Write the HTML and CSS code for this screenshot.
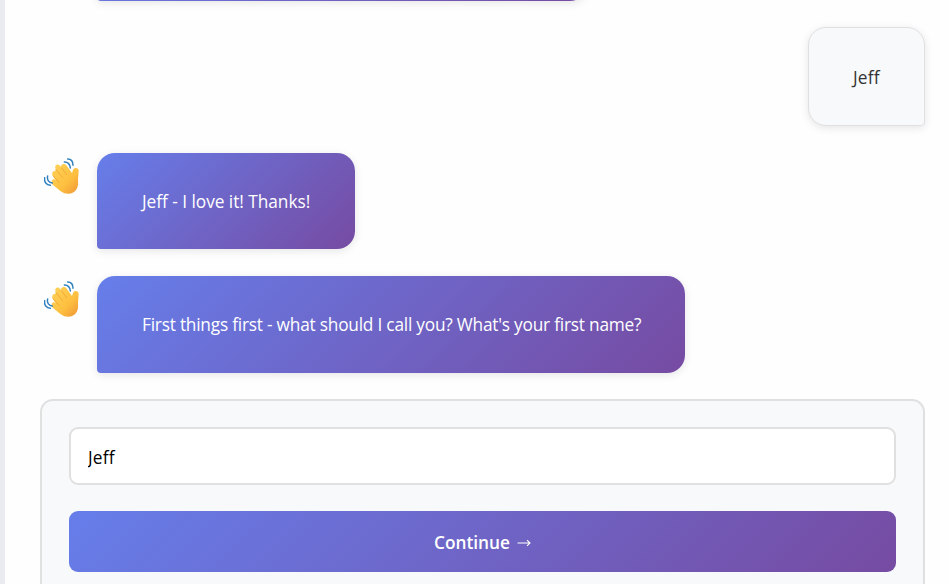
FILE: index.html
```
<!DOCTYPE html>
<html lang="en">
<head>
<meta charset="utf-8">
<title>Chat</title>
<link rel="stylesheet" href="styles.css">
</head>
<body>
<svg class="defs" aria-hidden="true">
  <defs>
    <linearGradient id="skin" x1="0" y1="0" x2="1" y2="1">
      <stop offset="0" stop-color="#ffd35a"/>
      <stop offset=".6" stop-color="#fdbf3f"/>
      <stop offset="1" stop-color="#ef9436"/>
    </linearGradient>
    <symbol id="wave" viewBox="24 22 105 108">
      <path d="M50 87C45 91 46 98 51 103L74 122C92 135 114 130 122 115C128 104 126 94 126 86L128 62C128 50 114 49 111 58L108 67L91 44C85 36 73 41 75 49L72 45C64 37 54 45 59 55L59 60C50 59 46 68 50 75L60 90C56 86 53 85 50 87Z" fill="url(#skin)"/>
      <path d="M60 57L79 80M52 76L69 95M77 52L92 72" fill="none" stroke="#efa638" stroke-width="2.6" stroke-linecap="round"/>
      <path d="M85 34C95 33 103 42 103 52M95 25C105 25 111 33 111 44M35 76C32 87 39 97 49 97M26 81C24 94 31 103 43 104" fill="none" stroke="#2d80bd" stroke-width="4.4" stroke-linecap="round"/>
    </symbol>
  </defs>
</svg>
<main class="chat">
  <div class="row earlier">
    <div class="avatar"></div>
    <div class="bubble bot previous"></div>
  </div>
  <div class="row mine">
    <div class="bubble user">Jeff</div>
  </div>
  <div class="row">
    <svg class="avatar"><use href="#wave"/></svg>
    <div class="bubble bot thanks">Jeff - I love it! Thanks!</div>
  </div>
  <div class="row">
    <svg class="avatar"><use href="#wave"/></svg>
    <div class="bubble bot question">First things first - what should I call you? What's your first name?</div>
  </div>
  <form class="panel">
    <input class="field" type="text" value="Jeff" aria-label="First name">
    <button class="continue" type="button">Continue
      <svg class="arrow" viewBox="0 0 14 10"><path d="M.5 5H13M10 2.2L13 5L10 7.8"/></svg>
    </button>
  </form>
</main>
</body>
</html>
```
FILE: styles.css
```
* { box-sizing: border-box; }
.defs { position: absolute; width: 0; height: 0; }
body {
  margin: 0;
  height: 584px;
  overflow: hidden;
  padding-left: 5px;
  background: #eaebf0;
  font-family: "Open Sans", "Noto Sans", sans-serif;
  font-size: 17.3px;
}
.chat {
  display: flex;
  flex-direction: column;
  justify-content: flex-end;
  gap: 27px;
  height: 584px;
  padding: 0 25px 0 35px;
  background: #fefefe;
}
.row { display: flex; align-items: flex-start; flex: none; }
.earlier { margin-bottom: -1px; }
.mine { justify-content: flex-end; }
.avatar { width: 35px; height: 36px; margin: 5px 18px 0 4px; flex: none; }
.bubble {
  display: flex;
  align-items: center;
  height: 96px;
  padding: 0 44px;
  border-radius: 18px;
  box-shadow: 0 2px 9px rgba(0, 0, 0, .1);
  white-space: nowrap;
}
.bot {
  color: #fff;
  background: linear-gradient(135deg, #667eea 0%, #764ba2 100%);
  border-bottom-left-radius: 4px;
}
.previous { width: 491px; }
.thanks { width: 258px; padding-left: 45px; letter-spacing: -.04px; }
.question { width: 588px; height: 97px; padding-left: 45px; letter-spacing: -.22px; }
.user {
  width: 117px;
  height: 99px;
  padding: 2px 0 0 44px;
  color: #333;
  background: #f8f9fb;
  border: 1px solid #dfe0e1;
  border-bottom-right-radius: 4px;
  letter-spacing: .2px;
}
.panel {
  flex: none;
  height: 185px;
  margin-top: -1px;
  padding: 26px 27px 0;
  background: #f8f9fb;
  border: 2px solid #dfe0e0;
  border-bottom: 0;
  border-radius: 13px 13px 0 0;
}
.field, .continue {
  display: block;
  width: 100%;
  font: inherit;
  border-radius: 9px;
}
.field {
  height: 58px;
  padding: 2px 17px 0;
  color: #000;
  background: #fff;
  border: 2px solid #e0e0e0;
  letter-spacing: .2px;
}
.continue {
  display: flex;
  align-items: center;
  justify-content: center;
  gap: 7px;
  height: 61px;
  margin-top: 26px;
  padding-top: 3px;
  border: 0;
  color: #fff;
  background: linear-gradient(135deg, #667eea 0%, #764ba2 100%);
  font-weight: 600;
}
.arrow { width: 14px; height: 10px; fill: none; stroke: #fff; stroke-width: 1.1; }
```
